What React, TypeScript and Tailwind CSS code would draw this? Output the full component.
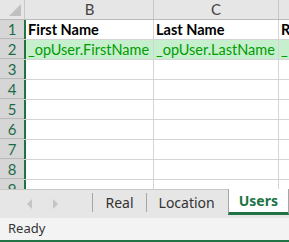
import { ReactNode } from 'react';

const GREEN = '#217346';

function Row({ n, b, c, d, good, bold }: { n: number; b?: string; c?: string; d?: string; good?: boolean; bold?: boolean }) {
  const cell = `h-full flex items-center pl-[2px] whitespace-nowrap overflow-hidden border-r border-[#d4d4d4] ${
    good ? 'bg-[#c6efce] text-[#009c00]' : 'text-black'
  } ${bold ? 'font-bold' : ''}`;
  return (
    <div className="flex h-[20px] shrink-0 border-b border-[#d4d4d4]">
      <div className="w-[24px] h-full flex items-center justify-center bg-[#d6d6d6] border-b border-[#bababa] text-[#1e6b4a] text-[15px] -mb-px">
        {n}
      </div>
      <div className="w-[2px] h-full bg-[#217346] -mb-px" />
      <div className={`w-[128px] ${cell}`}>{b}</div>
      <div className={`w-[125px] ${cell}`}>{c}</div>
      <div className={`flex-1 ${cell} border-r-0`}>{d}</div>
    </div>
  );
}

function Sep() {
  return <div className="w-px h-[19px] bg-[#a6a6a6]" />;
}

function Tab({ children }: { children: ReactNode }) {
  return <div className="px-[12px] h-full flex items-center text-[14px] text-[#333]">{children}</div>;
}

export default function App() {
  return (
    <div
      className="w-[289px] h-[242px] overflow-hidden flex flex-col bg-white text-[14.5px]"
      style={{ fontFamily: 'Lato, "Liberation Sans", sans-serif' }}
    >
      <div className="h-[189px] flex flex-col overflow-hidden shrink-0">
        <div className="flex h-[20px] shrink-0 bg-[#e6e6e6] border-b border-[#bababa] text-[15px] text-[#444]">
          <div className="w-[24px] h-full flex items-end justify-end pr-[3px] pb-[3px]">
            <div className="w-0 h-0 border-l-[12px] border-l-transparent border-b-[12px] border-b-[#c0c0c0]" />
          </div>
          <div className="w-[2px] h-full border-l border-[#c8c8c8]" />
          <div className="w-[128px] h-full flex items-center justify-center border-r border-[#c8c8c8]">B</div>
          <div className="w-[125px] h-full flex items-center justify-center border-r border-[#c8c8c8]">C</div>
          <div className="flex-1" />
        </div>
        <Row n={1} b="First Name" c="Last Name" d="R" bold />
        <Row n={2} b="_opUser.FirstName" c="_opUser.LastName" d="_" good />
        {[3, 4, 5, 6, 7, 8, 9].map((n) => (
          <Row key={n} n={n} />
        ))}
      </div>
      <div
        className="h-[29px] shrink-0 flex items-stretch bg-[#e6e6e6] border-t border-[#c6c6c6]"
        style={{ fontFamily: '"Noto Sans", "Open Sans", sans-serif' }}
      >
        <div className="w-[100px] flex items-center gap-[21px] pl-[27px]">
          <div className="w-0 h-0 border-y-[5px] border-y-transparent border-r-[5px] border-r-[#c4c4c4]" />
          <div className="w-0 h-0 border-y-[5px] border-y-transparent border-l-[5px] border-l-[#c4c4c4]" />
        </div>
        <div className="flex items-center h-[25px]">
          <Sep />
          <Tab>Real</Tab>
          <Sep />
          <Tab>Location</Tab>
        </div>
        <div className="ml-[1px] h-[26px] -mt-px px-[10px] flex items-center bg-white border-x border-[#a6a6a6] border-b-[3px] border-b-[#217346] text-[14px] font-bold" style={{ color: GREEN }}>
          Users
        </div>
      </div>
      <div
        className="flex-1 flex items-center pl-[8px] bg-[#f3f3f3] text-[13px] text-[#333] border-b-2 border-[#217346]"
        style={{ fontFamily: '"Noto Sans", "Open Sans", sans-serif' }}
      >
        Ready
      </div>
    </div>
  );
}
